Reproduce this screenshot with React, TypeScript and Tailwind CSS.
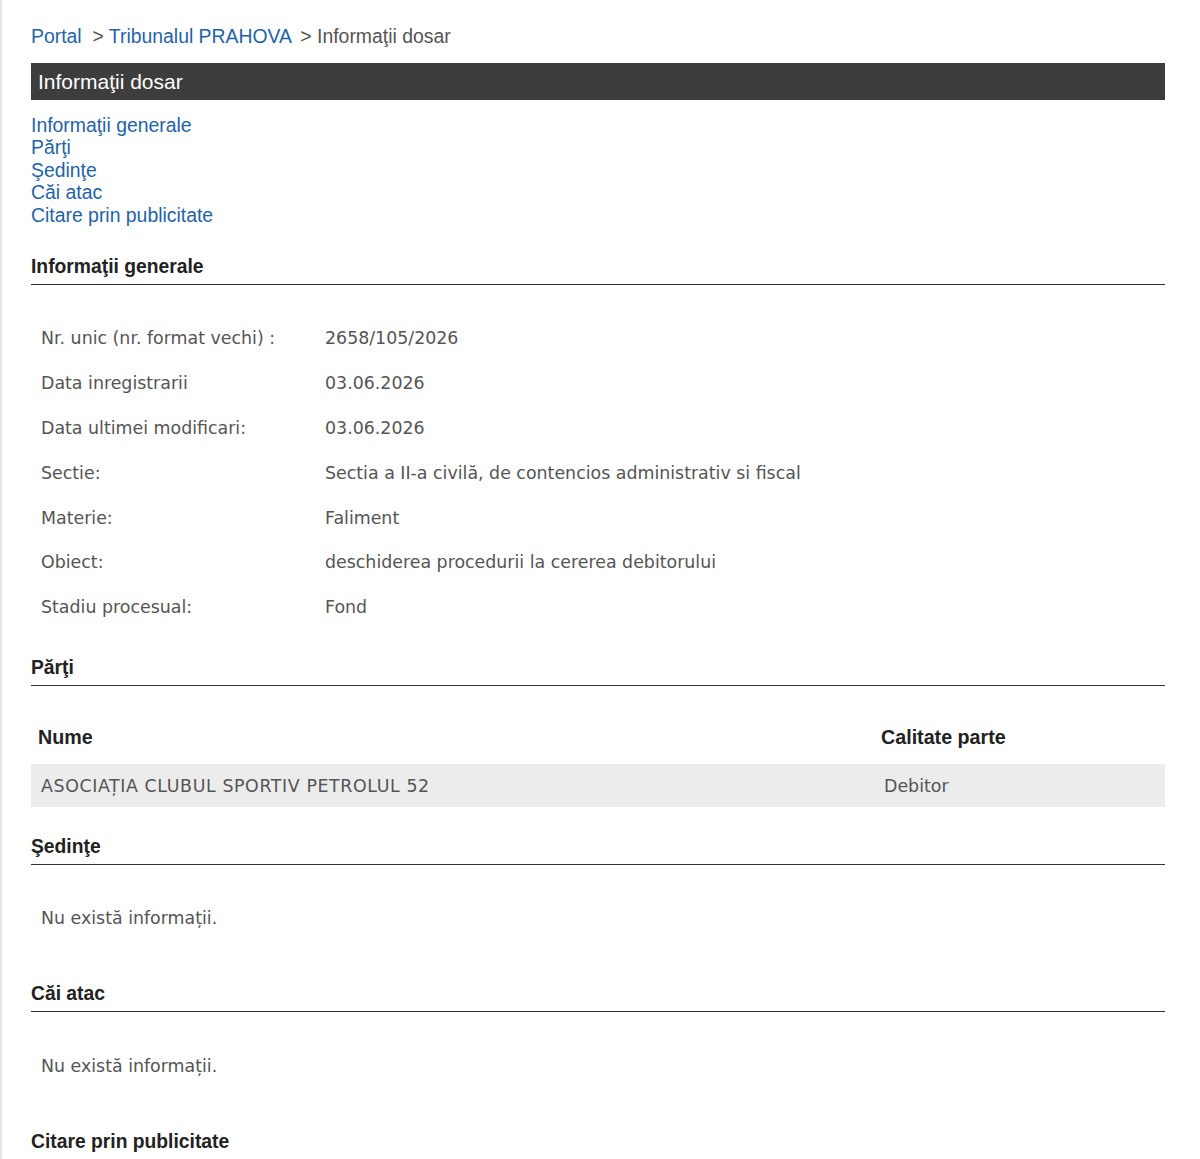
import React from "react";

const arial = { fontFamily: '"Liberation Sans", Arial, sans-serif' };
const body = { fontFamily: '"DejaVu Sans", Verdana, sans-serif' };

const info: [string, string][] = [
  ["Nr. unic (nr. format vechi) :", "2658/105/2026"],
  ["Data inregistrarii", "03.06.2026"],
  ["Data ultimei modificari:", "03.06.2026"],
  ["Sectie:", "Sectia a II-a civilă, de contencios administrativ si fiscal"],
  ["Materie:", "Faliment"],
  ["Obiect:", "deschiderea procedurii la cererea debitorului"],
  ["Stadiu procesual:", "Fond"],
];

function SectionTitle({ children, className = "" }: { children: React.ReactNode; className?: string }) {
  return (
    <h2
      style={arial}
      className={`text-[19.3px] leading-[22px] font-bold text-[#222] pb-[6px] border-b-[1.5px] border-[#333] ${className}`}
    >
      {children}
    </h2>
  );
}

export default function App() {
  return (
    <div className="min-h-[1159px] bg-white border-l-2 border-[#e4e4e4]">
      <div className="ml-[29px] mr-[35px] pt-[25px]">
        {/* breadcrumb */}
        <div style={arial} className="text-[19.4px] leading-[22px] text-[#555]">
          <a className="text-[#1f63a8]">Portal</a>
          <span>&nbsp; &gt; </span>
          <a className="text-[#1f63a8]">Tribunalul PRAHOVA</a>
          <span> <span className="ml-[4px]">&gt;</span> Informaţii dosar</span>
        </div>

        {/* title bar */}
        <div
          style={arial}
          className="mt-[16px] h-[37px] bg-[#3d3d3d] text-white text-[21px] leading-[37px] pl-[7px]"
        >
          Informaţii dosar
        </div>

        {/* in-page navigation */}
        <nav style={arial} className="mt-[14px] flex flex-col text-[19.4px] leading-[22.4px] text-[#1f63a8]">
          <a>Informaţii generale</a>
          <a>Părţi</a>
          <a>Şedinţe</a>
          <a>Căi atac</a>
          <a>Citare prin publicitate</a>
        </nav>

        {/* general info */}
        <SectionTitle className="mt-[30px]">Informaţii generale</SectionTitle>
        <div style={body} className="mt-[31px] text-[17.4px] text-[#555]">
          {info.map(([k, v]) => (
            <div key={k} className="flex h-[44.8px] items-center">
              <div className="w-[294px] pl-[10px] shrink-0">{k}</div>
              <div>{v}</div>
            </div>
          ))}
        </div>

        {/* parties */}
        <SectionTitle className="mt-[27px]">Părţi</SectionTitle>
        <div className="mt-[29px]">
          <div style={arial} className="flex h-[46px] items-center text-[19.7px] font-bold text-[#222]">
            <div className="flex-1 pl-[7px]">Nume</div>
            <div className="w-[284px]">Calitate parte</div>
          </div>
          <div style={body} className="mt-[3px] flex h-[43px] items-center pt-[1px] bg-[#ececec] text-[17.4px] text-[#555]">
            <div className="flex-1 pl-[10px] tracking-[0.6px]">ASOCIAȚIA CLUBUL SPORTIV PETROLUL 52</div>
            <div className="w-[281px]">Debitor</div>
          </div>
        </div>

        {/* hearings */}
        <SectionTitle className="mt-[29px]">Şedinţe</SectionTitle>
        <div style={body} className="mt-[31px] h-[45px] flex items-center pl-[10px] text-[17.4px] text-[#555]">
          Nu există informații.
        </div>

        {/* appeals */}
        <SectionTitle className="mt-[42px]">Căi atac</SectionTitle>
        <div style={body} className="mt-[32px] h-[45px] flex items-center pl-[10px] text-[17.4px] text-[#555]">
          Nu există informații.
        </div>

        {/* public summons */}
        <SectionTitle className="mt-[42px]">Citare prin publicitate</SectionTitle>
      </div>
    </div>
  );
}
